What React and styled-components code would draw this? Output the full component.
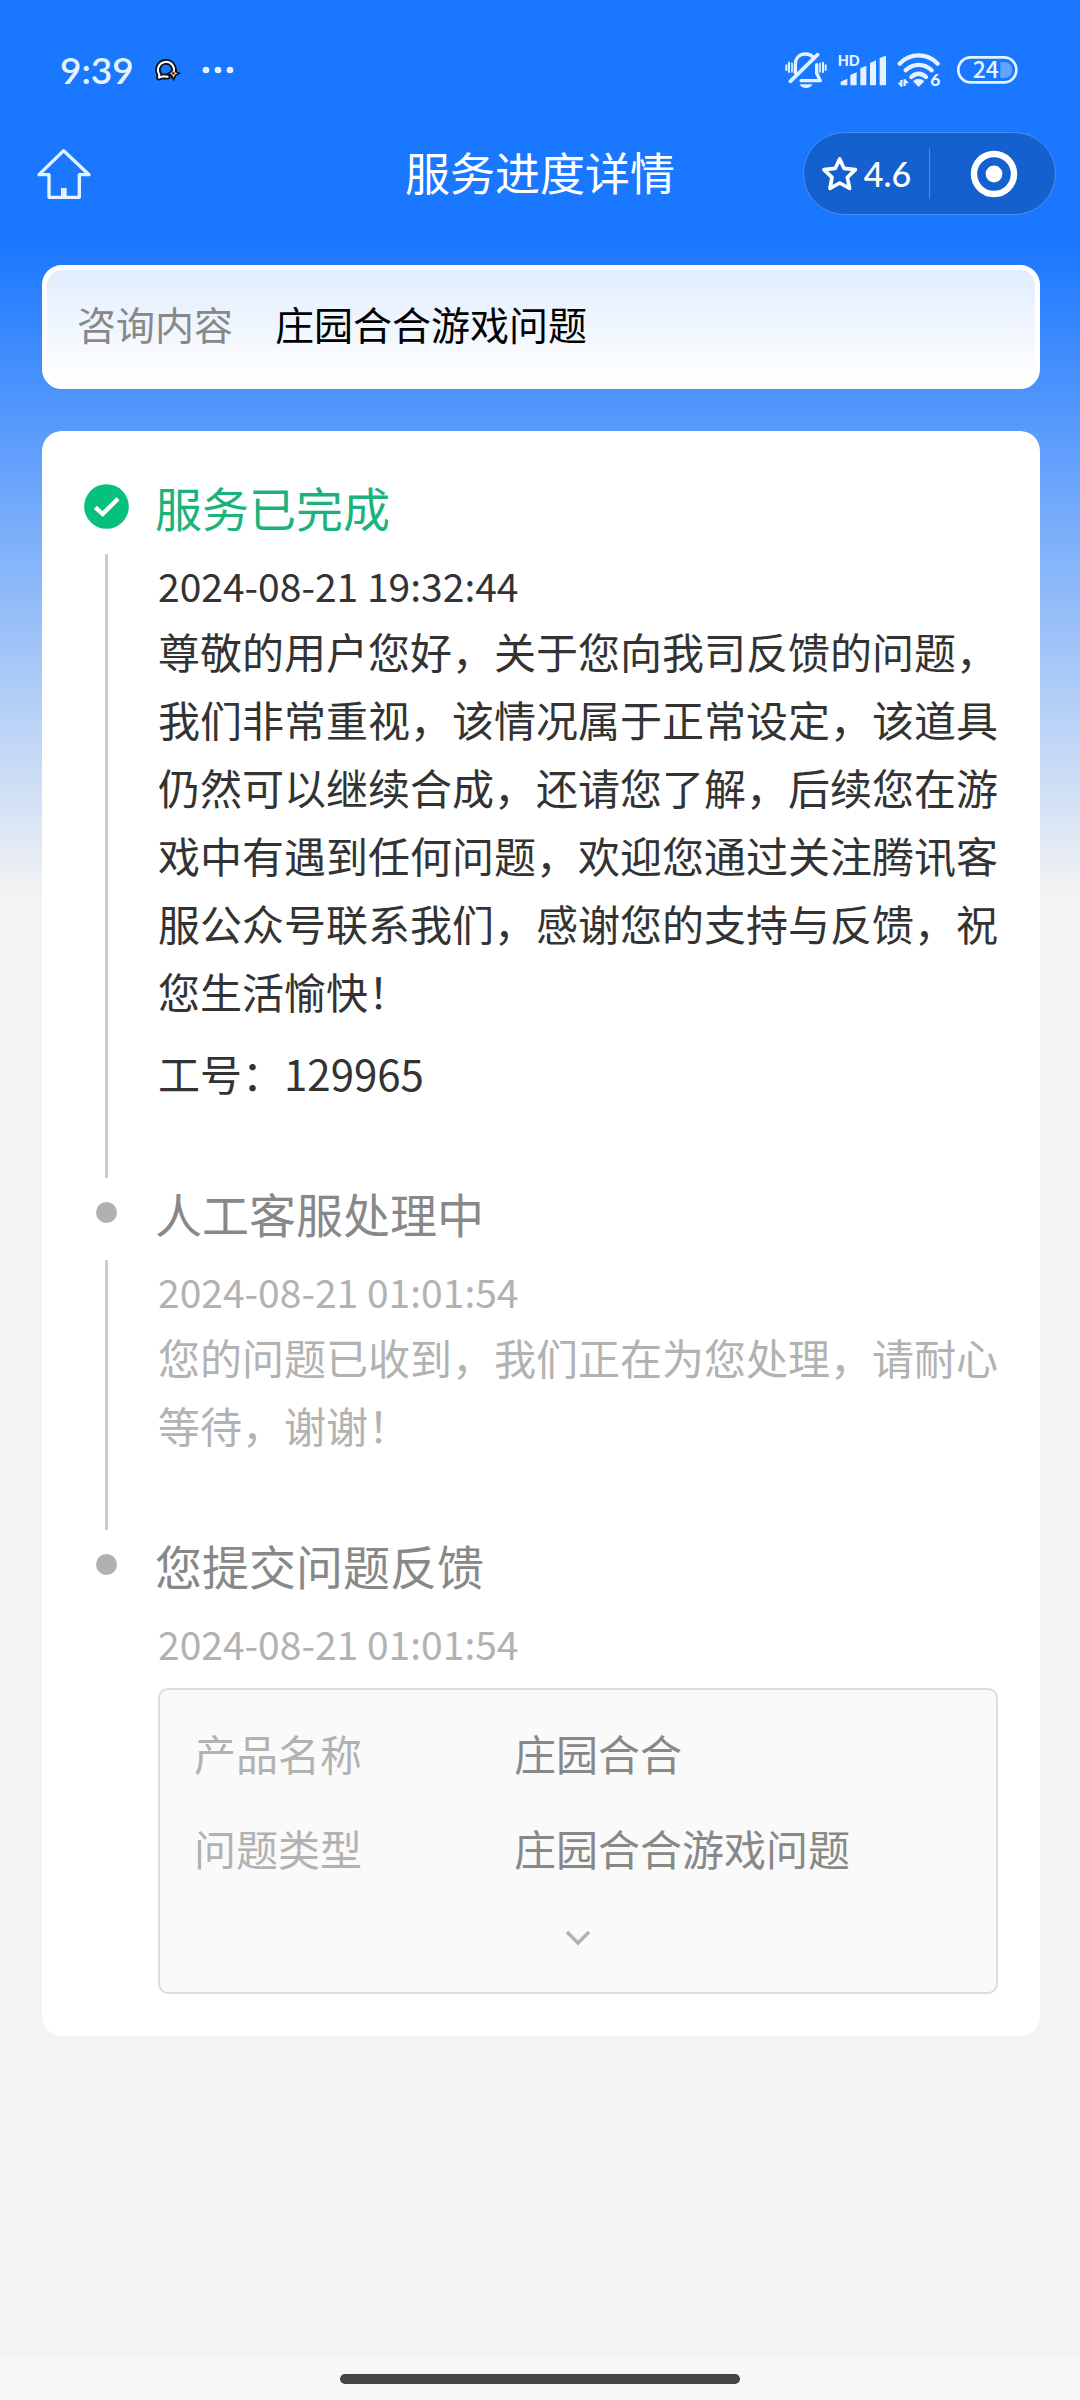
import React, { useState } from 'react';
import styled, { createGlobalStyle } from 'styled-components';

const GlobalStyle = createGlobalStyle`
  * {
    box-sizing: border-box;
  }
  body {
    margin: 0;
    background-color: #f3f3f3;
    font-family: "Noto Sans CJK SC", sans-serif;
  }
  h1, h2, p, ol, dl, dd {
    margin: 0;
    padding: 0;
    font-weight: 400;
  }
  button {
    display: flex;
    align-items: center;
    justify-content: center;
    padding: 0;
    border: none;
    background: none;
    cursor: pointer;
    font-family: inherit;
  }
  svg {
    display: block;
    flex: none;
    overflow: visible;
  }
`;

const Page = styled.div`
  display: flex;
  flex-direction: column;
  min-height: 100vh;
  background: linear-gradient(#1a77ff 240px, #f3f3f3 896px);
`;
const StatusBar = styled.div`
  display: flex;
  align-items: center;
  justify-content: space-between;
  height: 132px;
  padding: 8px 62px 0 60px;
`;
const StatusGroup = styled.div`
  display: flex;
  align-items: center;
  gap: ${props => props.$gap}px;
`;
const Time = styled.span`
  color: #e4f3ff;
  font-family: Lato, sans-serif;
  font-size: 37px;
  font-weight: 600;
  line-height: 40px;
`;
const NavBar = styled.header`
  display: grid;
  grid-template-columns: 1fr auto 1fr;
  align-items: center;
  padding: 0 24px;
`;
const HomeButton = styled.button`
  justify-self: start;
  margin-left: 13px;
`;
const NavTitle = styled.h1`
  padding-bottom: 4px;
  color: #fff;
  font-size: 45px;
  line-height: 60px;
`;
const Capsule = styled.div`
  display: flex;
  align-items: center;
  justify-self: end;
  width: 253px;
  height: 83px;
  border: 1px solid #4a8ff0;
  border-radius: 42px;
  background-color: #1560cf;
`;
const CapsuleButton = styled.button`
  flex: 1;
  gap: 7px;
  height: 51px;
  color: #fff;
  font-size: 34px;
  line-height: 40px;

  & + & {
    border-left: 1px solid #4f8ce6;
  }
`;
const Score = styled.span`
  font-family: Lato, sans-serif;
  font-weight: 500;
`;
const Main = styled.main`
  display: flex;
  flex-direction: column;
  gap: 42px;
  padding: 50px 40px 50px 42px;
`;
const Topic = styled.section`
  display: flex;
  gap: 42px;
  padding: 23px 30px 31px;
  border: 5px solid #fff;
  border-radius: 20px;
  background: linear-gradient(#e1edfe, #fff);
  font-size: 39px;
  line-height: 60px;
`;
const TopicLabel = styled.span`
  color: #888;
`;
const TopicValue = styled.span`
  color: #000;
`;
const Timeline = styled.ol`
  padding: 41px 42px 42px;
  border-radius: 20px;
  background-color: #fff;
  list-style: none;
`;
const Step = styled.li`
  display: grid;
  grid-template-columns: 45px 1fr;
  column-gap: 26px;
`;
const Rail = styled.div`
  display: flex;
  flex-direction: column;
  align-items: center;
`;
const Marker = styled.div`
  display: flex;
  align-items: center;
  justify-content: center;
  height: 68px;
`;
const Dot = styled.span`
  width: 21px;
  height: 21px;
  border-radius: 50%;
  background-color: #b0b0b0;
`;
const Connector = styled.span`
  flex: 1;
  width: 3px;
  margin-top: 14px;
  background-color: #ccc;
`;
const StepBody = styled.div`
  padding-bottom: ${props => (props.$last ? 0 : 71)}px;
`;
const StepTitle = styled.h2`
  color: ${props => (props.$active ? '#1cb27c' : '#888')};
  font-size: 47px;
  line-height: 70px;
`;
const StepContent = styled.div`
  padding: 13px 0 0 3px;
  color: ${props => (props.$active ? '#333' : '#b2b2b2')};
  font-size: 42px;
  line-height: 68px;
`;
const StepTime = styled.time`
  display: block;
  margin-bottom: 2px;
  font-size: 39px;
  line-height: 60px;
`;
const Worker = styled.p`
  margin-top: 14px;
`;
const Detail = styled.div`
  margin-top: 15px;
  padding-top: 33px;
  border: 2px solid #ddd;
  border-radius: 10px;
  background-color: #fafafa;
`;
const DetailList = styled.dl`
  display: grid;
  grid-template-columns: 320px 1fr;
  row-gap: 35px;
  padding: 0 34px;
  line-height: 60px;
`;
const DetailLabel = styled.dt`
  color: #b2b2b2;
`;
const DetailValue = styled.dd`
  color: #888;
`;
const ExpandButton = styled.button`
  width: 100%;
  height: 114px;
  padding-top: 4px;
`;
const GestureBar = styled.footer`
  display: flex;
  justify-content: center;
  height: 43px;
  margin-top: auto;
  padding-top: 17px;
  background-color: #f7f7f7;
`;
const Handle = styled.span`
  width: 37%;
  height: 10px;
  border-radius: 5px;
  background-color: #444;
`;

const ICON = '#e4f3ff';

const BubbleIcon = () => (
  <svg width="24" height="22" viewBox="0 0 72 66">
    <path d="M10 46a24 24 0 1 1 42-4M10 46l-1 10 12-4 14 1" fill="none" stroke="#0b1220" strokeWidth="17" strokeLinejoin="round" strokeLinecap="round" />
    <path d="M53 26l6 12 11 5-11 6-6 13-8-12-10-6 10-6z" fill="#0b1220" stroke="#0b1220" strokeWidth="5" />
    <path d="M10 46a24 24 0 1 1 42-4M10 46l-1 10 12-4 14 1" fill="none" stroke="#fff" strokeWidth="6" strokeLinejoin="round" strokeLinecap="round" />
    <path d="M53 32l4 8 8 3-8 4-4 9-5-9-7-4 7-3z" fill="#f5c9a8" />
    <circle cx="52" cy="43" r="4" fill="#7a1d1d" />
  </svg>
);

const MoreDots = () => (
  <svg width="32" height="8" viewBox="0 0 96 24">
    <circle cx="12" cy="12" r="10" fill={ICON} />
    <circle cx="48" cy="12" r="10" fill={ICON} />
    <circle cx="84" cy="12" r="10" fill={ICON} />
  </svg>
);

const MuteBellIcon = () => (
  <svg width="42" height="36" viewBox="0 0 126 108">
    <g fill="none" stroke={ICON} strokeLinecap="round" strokeLinejoin="round">
      <path d="M31 62V38C31 18 43 6 61 6c11 0 19 4 24 10M95 38v26l11 22H48" strokeWidth="10" />
      <path d="M98 8L16 88" strokeWidth="11" />
      <path d="M4 40v14M12 32v28M114 32v28M122 40v14" strokeWidth="6" />
      <path d="M21 34v26M105 34v26" strokeWidth="5" />
    </g>
    <path d="M44 97h38c-2 7-10 11-19 11s-17-4-19-11z" fill={ICON} />
  </svg>
);

const SignalIcon = () => (
  <svg width="48" height="31" viewBox="0 0 144 93">
    <text x="-1" y="33" fill={ICON} fontFamily="Lato, sans-serif" fontSize="43" fontWeight="900">HD</text>
    <g fill={ICON}>
      <path d="M8 80l20-9v20H11q-3 0-3-3z" />
      <path d="M37 60l19-8v39H37z" />
      <path d="M67 40l18-8v59H67z" />
      <path d="M96 24l18-8v75H96z" />
      <path d="M125 9l16-6q3-1 3 2v83q0 3-3 3h-16z" />
    </g>
  </svg>
);

const WifiIcon = () => (
  <svg width="44" height="36" viewBox="0 0 132 108">
    <g fill="none" stroke={ICON} strokeWidth="13" strokeLinecap="round">
      <path d="M8 35C40 2 90 2 122 35" />
      <path d="M26 55c22-22 56-22 78 0" />
      <path d="M43 75c13-13 31-13 44 0" />
    </g>
    <path d="M51 88c8-8 20-8 28 0L65 102z" fill={ICON} stroke={ICON} strokeWidth="4" strokeLinejoin="round" />
    <path d="M13 84v20M23 82v20" stroke={ICON} strokeWidth="7" />
    <path d="M1 92h12v13zM36 94H24V81z" fill={ICON} />
    <text x="100" y="103" fill={ICON} fontFamily="Lato, sans-serif" fontSize="52" fontWeight="900">6</text>
  </svg>
);

const BatteryIcon = () => (
  <svg width="61" height="28" viewBox="0 0 183 84">
    <path d="M130 18h12a24 24 0 0 1 0 48h-12z" fill="#5fa5ff" />
    <rect x="4" y="4" width="174" height="75" rx="37" fill="none" stroke={ICON} strokeWidth="8" />
    <text x="47" y="67" fill={ICON} fontFamily="'Noto Sans CJK SC', sans-serif" fontSize="69" fontWeight="500">24</text>
  </svg>
);

const HomeIcon = () => (
  <svg width="54" height="52" viewBox="0 0 162 156">
    <path d="M80 8L6 80h30v68h91V80h29z" fill="none" stroke="#e4f3ff" strokeWidth="10" strokeLinejoin="round" />
    <path d="M72 120h17v28H72z" fill="#e4f3ff" />
  </svg>
);

const StarIcon = () => (
  <svg width="35" height="35" viewBox="0 0 105 105">
    <path d="M53 9l13 28 34 4-24 23 7 33-30-16-29 16 6-33L6 41l34-4z" fill="none" stroke="#fff" strokeWidth="11" strokeLinejoin="round" />
  </svg>
);

const TargetIcon = () => (
  <svg width="48" height="48" viewBox="0 0 48 48">
    <circle cx="25" cy="24" r="20" fill="none" stroke="#fff" strokeWidth="6.4" />
    <circle cx="25" cy="24" r="8.4" fill="#fff" />
  </svg>
);

const CheckIcon = () => (
  <svg width="45" height="45" viewBox="0 0 135 135">
    <circle cx="67.500" cy="67.500" r="67" fill="#06c17c" />
    <path d="M34 70l22 20 46-46" fill="none" stroke="#fff" strokeWidth="13" />
  </svg>
);

const ChevronIcon = ({ open }) => (
  <svg width="26" height="18" viewBox="0 0 26 18">
    <path d={open ? 'M2 15L13 4l11 11' : 'M2 4l11 11L24 4'} fill="none" stroke="#b2b2b2" strokeWidth="3.5" />
  </svg>
);

const steps = [
  {
    title: '服务已完成',
    time: '2024-08-21 19:32:44',
    text: '尊敬的用户您好，关于您向我司反馈的问题，我们非常重视，该情况属于正常设定，该道具仍然可以继续合成，还请您了解，后续您在游戏中有遇到任何问题，欢迎您通过关注腾讯客服公众号联系我们，感谢您的支持与反馈，祝您生活愉快！',
    worker: '129965',
    active: true
  },
  {
    title: '人工客服处理中',
    time: '2024-08-21 01:01:54',
    text: '您的问题已收到，我们正在为您处理，请耐心等待，谢谢！'
  },
  {
    title: '您提交问题反馈',
    time: '2024-08-21 01:01:54',
    details: [
      { label: '产品名称', value: '庄园合合' },
      { label: '问题类型', value: '庄园合合游戏问题' }
    ]
  }
];

function DetailCard({ details }) {
  const [open, setOpen] = useState(false);

  return (
    <Detail>
      <DetailList>
        {details.map(item => (
          <React.Fragment key={item.label}>
            <DetailLabel>{item.label}</DetailLabel>
            <DetailValue>{item.value}</DetailValue>
          </React.Fragment>
        ))}
      </DetailList>
      <ExpandButton type="button" aria-label="展开" aria-expanded={open} onClick={() => setOpen(!open)}>
        <ChevronIcon open={open} />
      </ExpandButton>
    </Detail>
  );
}

export default function App() {
  return (
    <Page>
      <GlobalStyle />
      <StatusBar>
        <StatusGroup $gap={22}>
          <Time>9:39</Time>
          <BubbleIcon />
          <MoreDots />
        </StatusGroup>
        <StatusGroup $gap={16}>
          <StatusGroup $gap={11}>
            <MuteBellIcon />
            <SignalIcon />
            <WifiIcon />
          </StatusGroup>
          <BatteryIcon />
        </StatusGroup>
      </StatusBar>
      <NavBar>
        <HomeButton type="button" aria-label="首页">
          <HomeIcon />
        </HomeButton>
        <NavTitle>服务进度详情</NavTitle>
        <Capsule>
          <CapsuleButton type="button">
            <StarIcon />
            <Score>4.6</Score>
          </CapsuleButton>
          <CapsuleButton type="button" aria-label="关闭">
            <TargetIcon />
          </CapsuleButton>
        </Capsule>
      </NavBar>
      <Main>
        <Topic>
          <TopicLabel>咨询内容</TopicLabel>
          <TopicValue>庄园合合游戏问题</TopicValue>
        </Topic>
        <Timeline>
          {steps.map((step, i) => {
            const last = i === steps.length - 1;
            return (
              <Step key={step.title}>
                <Rail>
                  <Marker>{step.active ? <CheckIcon /> : <Dot />}</Marker>
                  {!last && <Connector />}
                </Rail>
                <StepBody $last={last}>
                  <StepTitle $active={step.active}>{step.title}</StepTitle>
                  <StepContent $active={step.active}>
                    <StepTime>{step.time}</StepTime>
                    {step.text && <p>{step.text}</p>}
                    {step.worker && <Worker>工号：{step.worker}</Worker>}
                    {step.details && <DetailCard details={step.details} />}
                  </StepContent>
                </StepBody>
              </Step>
            );
          })}
        </Timeline>
      </Main>
      <GestureBar>
        <Handle />
      </GestureBar>
    </Page>
  );
}
